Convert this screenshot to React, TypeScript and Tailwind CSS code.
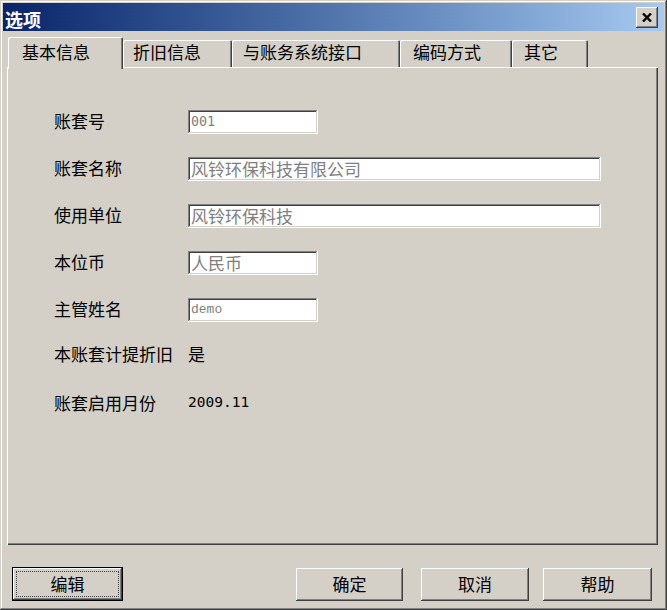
import React from "react";

const raised =
  "shadow-[inset_-1px_-1px_#404040,inset_1px_1px_#ffffff,inset_-2px_-2px_#808080,inset_2px_2px_#d4d0c8]";
const sunken =
  "shadow-[inset_-1px_-1px_#ffffff,inset_1px_1px_#808080,inset_-2px_-2px_#d4d0c8,inset_2px_2px_#404040]";

type Tab = { label: string; width: string; pad: string; active?: boolean };

const tabs: Tab[] = [
  { label: "基本信息", width: "w-[115px]", pad: "pl-[14px]", active: true },
  { label: "折旧信息", width: "w-[109px]", pad: "pl-[10px]" },
  { label: "与账务系统接口", width: "w-[168px]", pad: "pl-[11px]" },
  { label: "编码方式", width: "w-[112px]", pad: "pl-[13px]" },
  { label: "其它", width: "w-[76px]", pad: "pl-[12px]" },
];

function TabButton({ tab }: { tab: Tab }) {
  if (tab.active) {
    return (
      <div
        className={`relative z-10 h-[32px] -mb-[2px] ${tab.width} ${tab.pad} pt-[6px] bg-[#d4d0c8] rounded-t-[2px] text-[17px] leading-[17px] shadow-[inset_1px_1px_#ffffff,inset_-1px_0_#404040,inset_-2px_0_#808080]`}
      >
        {tab.label}
      </div>
    );
  }
  return (
    <div
      className={`h-[27px] ${tab.width} ${tab.pad} pt-[3px] bg-[#d4d0c8] rounded-t-[2px] text-[17px] leading-[17px] shadow-[inset_1px_1px_#ffffff,inset_-1px_0_#404040,inset_-2px_0_#808080]`}
    >
      {tab.label}
    </div>
  );
}

function Field({
  label,
  value,
  wide,
  mono,
}: {
  label: string;
  value: string;
  wide?: boolean;
  mono?: "sans" | "courier";
}) {
  const valueClass =
    mono === "sans"
      ? "font-['DejaVu_Sans_Mono',monospace] text-[13.3px]"
      : mono === "courier"
        ? "font-['Liberation_Mono',monospace] text-[13px]"
        : "text-[17px]";
  return (
    <div className="flex items-center h-[24px]">
      <span className="w-[134px] pb-[3px] text-[17px] leading-[17px]">{label}</span>
      <div
        className={`${sunken} bg-white h-[24px] ${wide ? "w-[413px]" : "w-[130px]"} pl-[3px] pb-[1px] flex items-center text-[#808080] leading-[20px] ${valueClass}`}
      >
        {value}
      </div>
    </div>
  );
}

function PushButton({
  label,
  width,
  isDefault,
}: {
  label: string;
  width: string;
  isDefault?: boolean;
}) {
  if (isDefault) {
    return (
      <div className={`${width} h-[34px] border border-black bg-[#d4d0c8]`}>
        <div className={`${raised} h-full p-[3px]`}>
          <div className="h-full pb-[2px] border border-dotted border-[#404040] flex items-center justify-center text-[17px] leading-[17px]">
            {label}
          </div>
        </div>
      </div>
    );
  }
  return (
    <div
      className={`${raised} ${width} h-[33px] pb-[2px] bg-[#d4d0c8] flex items-center justify-center text-[17px] leading-[17px]`}
    >
      {label}
    </div>
  );
}

export default function App() {
  return (
    <div className="w-[667px] h-[610px] bg-[#d4d0c8] p-[3px] flex flex-col text-black font-['Noto_Sans_CJK_SC',sans-serif] shadow-[inset_-1px_-1px_#404040,inset_1px_1px_#d4d0c8,inset_-2px_-2px_#808080,inset_2px_2px_#ffffff]">
      {/* title bar */}
      <div className="h-[28px] flex items-start justify-between bg-gradient-to-r from-[#0a246a] to-[#a6caf0]">
        <span className="pl-[2px] pt-[7px] text-[18px] leading-[18px] font-bold text-white">选项</span>
        <div
          className={`${raised} mt-[4px] mr-[6px] w-[22px] h-[21px] bg-[#d4d0c8] flex items-center justify-center`}
        >
          <svg width="10" height="9" viewBox="0 0 10 9">
            <path d="M1 0.5 L9 8.5 M9 0.5 L1 8.5" stroke="#000" strokeWidth="2.4" />
          </svg>
        </div>
      </div>

      {/* tabs */}
      <div className="mt-[6px] ml-[4px] mr-[6px] flex flex-col">
        <div className="flex items-end h-[30px] pl-[1px]">
          {tabs.map((t) => (
            <TabButton key={t.label} tab={t} />
          ))}
        </div>
        <div className="h-[478px] shadow-[inset_1px_1px_#ffffff,inset_-1px_-1px_#404040,inset_-2px_-2px_#808080] pl-[47px] pt-[43px] flex flex-col">
          <Field label="账套号" value="001" mono="sans" />
          <div className="h-[23px]" />
          <Field label="账套名称" value="风铃环保科技有限公司" wide />
          <div className="h-[23px]" />
          <Field label="使用单位" value="风铃环保科技" wide />
          <div className="h-[23px]" />
          <Field label="本位币" value="人民币" />
          <div className="h-[23px]" />
          <Field label="主管姓名" value="demo" mono="courier" />
          <div className="mt-[23px] h-[20px] flex items-center">
            <span className="w-[134px] pb-[3px] text-[17px] leading-[17px]">本账套计提折旧</span>
            <span className="pb-[3px] text-[17px] leading-[17px]">是</span>
          </div>
          <div className="mt-[27px] h-[24px] flex items-center">
            <span className="w-[134px] pb-[3px] text-[17px] leading-[17px]">账套启用月份</span>
            <span className="pb-[3px] font-['DejaVu_Sans_Mono',monospace] text-[14.5px] leading-[17px]">2009.11</span>
          </div>
        </div>
      </div>

      {/* buttons */}
      <div className="mt-[22px] flex items-start px-[9px]">
        <PushButton label="编辑" width="w-[111px]" isDefault />
        <div className="ml-auto flex items-start mt-[1px] mr-[3px]">
          <PushButton label="确定" width="w-[107px]" />
          <div className="w-[18px]" />
          <PushButton label="取消" width="w-[108px]" />
          <div className="w-[14px]" />
          <PushButton label="帮助" width="w-[109px]" />
        </div>
      </div>
    </div>
  );
}
